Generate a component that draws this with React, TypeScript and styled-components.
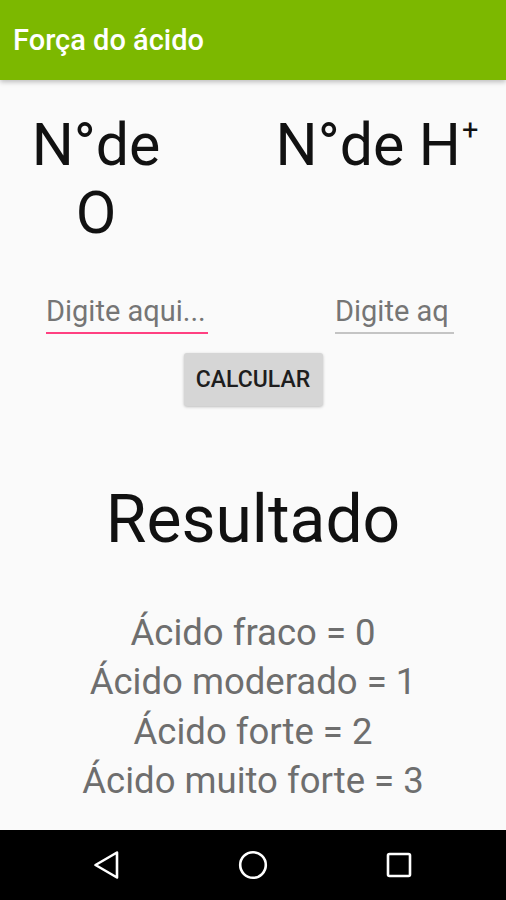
import { createGlobalStyle, styled } from 'styled-components';

const GlobalStyle = createGlobalStyle`
    html, body {
        margin: 0;
        padding: 0;
        background: #fafafa;
    }

    body {
        font-family: Roboto, 'Noto Sans', sans-serif;
    }
`;

const Screen = styled.div`
    display: flex;
    flex-direction: column;
    width: 506px;
    height: 900px;
    background: #fafafa;
    overflow: hidden;
`;

const AppBar = styled.header`
    position: relative;
    z-index: 2;
    display: flex;
    align-items: center;
    height: 80px;
    padding: 0 13px;
    background: #7cb800;
    box-shadow: 0 2px 5px rgba(0, 0, 0, 0.25);
    color: #fff;
    font-size: 29px;
    font-weight: 500;
    box-sizing: border-box;
`;

const Content = styled.main`
    flex: 1;
    display: flex;
    flex-direction: column;
    align-items: center;
`;

const Headings = styled.div`
    align-self: stretch;
    display: grid;
    grid-template-columns: 160px 1fr;
    column-gap: 72px;
    padding: 31px 0 0 16px;
`;

const Heading = styled.h2`
    margin: 0;
    font-size: 59px;
    font-weight: 400;
    line-height: 68px;
    color: #111;
    text-align: center;

    sup {
        font-size: 29px;
        line-height: 0;
        vertical-align: 25px;
        margin-left: 1px;
    }
`;

const Inputs = styled.div`
    align-self: stretch;
    display: grid;
    grid-template-columns: 162px 119px;
    justify-content: space-between;
    padding: 47px 52px 0 46px;
`;

const Field = styled.div<{ $focused?: boolean }>`
    padding: 0 ${(p) => (p.$focused ? 0 : 7)}px 4px 0;
    border-bottom: 2px solid ${(p) => (p.$focused ? '#ff4081' : '#c4c4c4')};
`;

const Hint = styled.span<{ $ellipsis?: boolean }>`
    display: block;
    overflow: hidden;
    white-space: nowrap;
    text-overflow: ${(p) => (p.$ellipsis ? 'ellipsis' : 'clip')};
    font-size: 29px;
    line-height: 34px;
    color: #757575;
`;

const Button = styled.button`
    margin-top: 19px;
    width: 139px;
    height: 53px;
    border: none;
    border-radius: 3px;
    background: #d6d6d6;
    box-shadow: 0 1px 3px rgba(0, 0, 0, 0.25);
    font-family: Roboto, sans-serif;
    font-size: 23px;
    font-weight: 500;
    color: #1e1e1e;
`;

const ResultTitle = styled.h1`
    margin: 76px 0 0;
    font-size: 66px;
    font-weight: 400;
    line-height: 76px;
    color: #111;
`;

const Scale = styled.ul`
    list-style: none;
    margin: 50px 0 0;
    padding: 0;
    text-align: center;
`;

const ScaleItem = styled.li`
    font-size: 36.5px;
    line-height: 49.3px;
    color: #6e6e6e;
`;

const NavBar = styled.nav`
    display: flex;
    justify-content: center;
    align-items: center;
    height: 70px;
    background: #000;
`;

const NavButton = styled.div`
    display: flex;
    width: 146px;
    justify-content: center;
`;

const levels = ['Ácido fraco = 0', 'Ácido moderado = 1', 'Ácido forte = 2', 'Ácido muito forte = 3'];

export default function App() {
    return (
        <Screen>
            <GlobalStyle />
            <AppBar>Força do ácido</AppBar>
            <Content>
                <Headings>
                    <Heading>N°de O</Heading>
                    <Heading>
                        N°de H<sup>+</sup>
                    </Heading>
                </Headings>
                <Inputs>
                    <Field $focused>
                        <Hint $ellipsis>Digite aqui...</Hint>
                    </Field>
                    <Field>
                        <Hint>Digite aqui...</Hint>
                    </Field>
                </Inputs>
                <Button>CALCULAR</Button>
                <ResultTitle>Resultado</ResultTitle>
                <Scale>
                    {levels.map((l) => (
                        <ScaleItem key={l}>{l}</ScaleItem>
                    ))}
                </Scale>
            </Content>
            <NavBar>
                <NavButton>
                    <svg width="30" height="30" viewBox="0 0 30 30">
                        <path d="M25 2.5 L3.5 15 L25 27.5 Z" fill="none" stroke="#fff" strokeWidth="2.6" strokeLinejoin="round" />
                    </svg>
                </NavButton>
                <NavButton>
                    <svg width="30" height="30" viewBox="0 0 30 30">
                        <circle cx="15" cy="15" r="12.8" fill="none" stroke="#fff" strokeWidth="2.6" />
                    </svg>
                </NavButton>
                <NavButton>
                    <svg width="28" height="28" viewBox="0 0 28 28">
                        <rect x="3" y="3" width="22" height="22" rx="1.5" fill="none" stroke="#fff" strokeWidth="2.6" />
                    </svg>
                </NavButton>
            </NavBar>
        </Screen>
    );
}
